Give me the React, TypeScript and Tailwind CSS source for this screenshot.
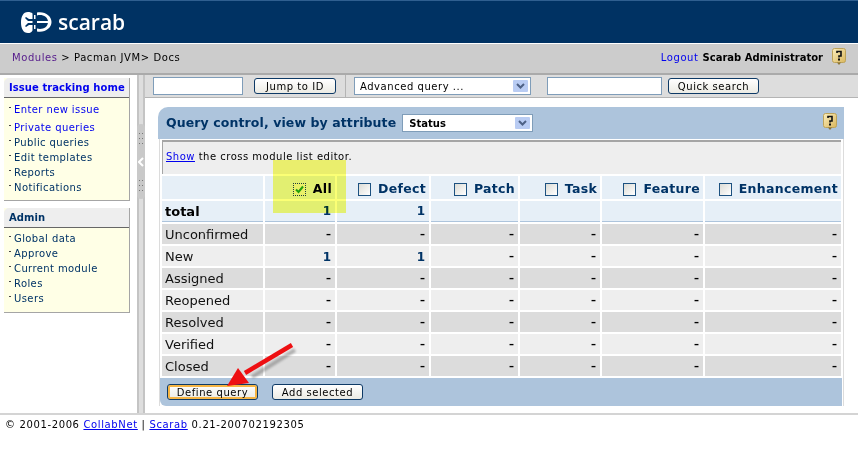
import React from 'react';

const HelpIcon = () => (
  <svg width="14" height="18" viewBox="0 0 14 18" className="block shrink-0">
    <defs>
      <linearGradient id="helpGold" x1="0" y1="0" x2="1" y2="1">
        <stop offset="0" stopColor="#fbeebd" />
        <stop offset="1" stopColor="#d9b65c" />
      </linearGradient>
    </defs>
    <rect x="0.5" y="0.5" width="13" height="14" rx="2" fill="url(#helpGold)" stroke="#bda35a" />
    <path d="M5 14.500h4l-2 2.500z" fill="#8a7336" />
    <path d="M5 5V3.500h4V8H7v1.500" fill="none" stroke="#111" strokeWidth="1.600" />
    <rect x="6" y="10.500" width="2" height="2" fill="#111" />
  </svg>
);

const SelectArrow = () => (
  <span className="flex h-[12px] w-[15px] items-center justify-center rounded-[1px] bg-[#b9ccf3]">
    <svg width="9" height="6" viewBox="0 0 9 6">
      <path d="M1 1l3.500 3.500L8 1" fill="none" stroke="#4d6185" strokeWidth="2" />
    </svg>
  </span>
);

const Button = ({ label, width, active }: { label: string; width: string; active?: boolean }) => (
  <button
    className={`flex h-[16px] items-center justify-center rounded-[3px] border border-[#0e3a66] bg-gradient-to-b from-white to-[#ecebe4] text-[10px] tracking-[0.55px] text-black ${width} ${
      active ? 'shadow-[inset_0_0_0_2px_#f6b544]' : ''
    }`}
  >
    {label}
  </button>
);

const Checkbox = ({ checked }: { checked?: boolean }) =>
  checked ? (
    <span className="flex h-[13px] w-[13px] items-center justify-center border border-dotted border-[#1d3f8a] bg-[#eef0e0]">
      <svg width="9" height="9" viewBox="0 0 9 9">
        <path d="M1 4.500l2.500 2.500L8 1.500" fill="none" stroke="#22a012" strokeWidth="2" />
      </svg>
    </span>
  ) : (
    <span className="h-[13px] w-[13px] border border-[#1c5180] bg-gradient-to-br from-[#dcdcd6] to-white" />
  );

const columns = ['All', 'Defect', 'Patch', 'Task', 'Feature', 'Enhancement'];

const rows: { name: string; values: string[] }[] = [
  { name: 'Unconfirmed', values: ['–', '–', '–', '–', '–', '–'] },
  { name: 'New', values: ['1', '1', '–', '–', '–', '–'] },
  { name: 'Assigned', values: ['–', '–', '–', '–', '–', '–'] },
  { name: 'Reopened', values: ['–', '–', '–', '–', '–', '–'] },
  { name: 'Resolved', values: ['–', '–', '–', '–', '–', '–'] },
  { name: 'Verified', values: ['–', '–', '–', '–', '–', '–'] },
  { name: 'Closed', values: ['–', '–', '–', '–', '–', '–'] },
];

const SideBox = ({
  title,
  titleClass,
  listClass,
  items,
}: {
  title: string;
  titleClass: string;
  listClass: string;
  items: { label: string; cls: string }[];
}) => (
  <div className="w-[126px] border-r border-b border-[#a5a5a5] bg-[#ffffe6]">
    <div className={`flex h-[20px] items-center rounded-tl-[5px] border-b border-[#666] bg-[#eeeeee] pl-[5px] text-[10px] font-bold tracking-[0.07px] whitespace-nowrap ${titleClass}`}>
      {title}
    </div>
    <div className={`flex flex-col pl-[5px] ${listClass}`}>
      {items.map((it) => (
        <div key={it.label} className={`flex h-[15px] items-center text-[10px] leading-[15px] ${it.cls}`}>
          <span className="mr-[3px] mb-[5px] h-[1px] w-[2px] bg-[#444]" />
          <span className="tracking-[0.4px]">{it.label}</span>
        </div>
      ))}
    </div>
  </div>
);

const GripDots = () => (
  <div className="h-[15px] w-[6px] bg-[radial-gradient(circle,#777_1px,transparent_1px)] bg-[length:3px_5px]" />
);

export default function App() {
  return (
    <div className="relative h-[461px] w-[858px] overflow-hidden bg-white font-['DejaVu_Sans','Liberation_Sans',sans-serif] text-[11px] text-black">
      {/* banner */}
      <div className="flex h-[43px] items-center border-t border-[#2f5f90] bg-[#003263] pl-[20px]">
        <svg width="32" height="22" viewBox="0 0 32 22" className="mr-[6px]">
          <g fill="#fff">
            <path d="M8 1c2 0 3.500.5 4.500 1.500V8H9L6 6l-1 1 3 3h4.500v2H8l-3 3 1 1 3-2h3.500v5.500C11.500 21.500 10 22 8 22 3 22 1 17 1 11.500S3 1 8 1z" />
            <path d="M14 4h1.500v4H14zM14 14h1.500v4H14z" />
            <path d="M17 1.500C25 0 31.500 5 31.500 11S25 22 17 20.500v-3c5 1.500 11-1 11-6.500S22 3 17 4.500z" />
            <rect x="17" y="10" width="11" height="2" />
          </g>
        </svg>
        <span className="font-['Open_Sans',sans-serif] text-[21px] leading-none font-semibold text-white">scarab</span>
      </div>
      <div className="h-[1px] bg-white" />

      {/* breadcrumb bar */}
      <div className="flex h-[31px] items-center justify-between border-b-2 border-[#aaaaaa] bg-[#cccccc] pr-[12px] pb-[3px] pl-[12px] tracking-[0.57px]">
        <div className="text-[10px]">
          <span className="text-[#551a8b]">Modules</span> &gt; Pacman JVM&gt; Docs
        </div>
        <div className="flex items-center text-[10px]">
          <span className="text-[#0000ee]">Logout</span>
          <span className="ml-[4px] font-bold tracking-[0px]">Scarab Administrator</span>
          <span className="ml-[9px]"><HelpIcon /></span>
        </div>
      </div>

      <div className="flex h-[340px] border-b-2 border-[#d4d4d4]">
        {/* sidebar */}
        <div className="flex w-[137px] shrink-0 flex-col gap-[7px] pt-[3px] pl-[4px]">
          <SideBox
            title="Issue tracking home"
            titleClass="text-[#0000ee]"
            listClass="pt-[4px] pb-[5px]"
            items={[
              { label: 'Enter new issue', cls: 'text-[#0000ee] mb-[3px]' },
              { label: 'Private queries', cls: 'text-[#0000ee]' },
              { label: 'Public queries', cls: 'text-[#003366]' },
              { label: 'Edit templates', cls: 'text-[#003366]' },
              { label: 'Reports', cls: 'text-[#003366]' },
              { label: 'Notifications', cls: 'text-[#003366]' },
            ]}
          />
          <SideBox
            title="Admin"
            titleClass="text-[#003366]"
            listClass="pt-[3px] pb-[6px]"
            items={[
              { label: 'Global data', cls: 'text-[#003366]' },
              { label: 'Approve', cls: 'text-[#003366]' },
              { label: 'Current module', cls: 'text-[#003366]' },
              { label: 'Roles', cls: 'text-[#003366]' },
              { label: 'Users', cls: 'text-[#003366]' },
            ]}
          />
        </div>

        {/* splitter */}
        <div className="relative w-[8px] shrink-0 border-x-2 border-[#c4c4c4] bg-[#dedede]">
          <div className="absolute top-[49px] left-[-2px] flex h-[75px] w-[8px] flex-col items-center justify-center rounded-[4px] bg-[#c9c9c9]">
            <GripDots />
            <svg width="6" height="10" viewBox="0 0 6 10" className="my-[11px]">
              <path d="M5 1L1 5l4 4" fill="none" stroke="#fff" strokeWidth="2" />
            </svg>
            <GripDots />
          </div>
        </div>

        <div className="min-w-0 flex-1">
          {/* toolbar */}
          <div className="flex h-[23px] items-center border-b border-[#b4b4b4] bg-[#dddddd] pl-[8px]">
            <span className="h-[18px] w-[90px] border border-[#7f9db9] bg-white" />
            <span className="ml-[11px]"><Button label="Jump to ID" width="w-[82px]" /></span>
            <span className="ml-[9px] w-[1px] self-stretch bg-[#b4b4b4]" />
            <div className="ml-[8px] flex h-[18px] w-[177px] items-center justify-between border border-[#7f9db9] bg-white pr-[2px] pl-[5px] text-[10px] tracking-[0.55px]">
              Advanced query ...
              <SelectArrow />
            </div>
            <span className="ml-[16px] h-[18px] w-[115px] border border-[#7f9db9] bg-white" />
            <span className="ml-[6px]"><Button label="Quick search" width="w-[91px]" /></span>
          </div>

          {/* panel */}
          <div className="mt-[9px] ml-[13px] w-[686px]">
            <div className="flex h-[32px] items-center justify-between rounded-tl-[10px] bg-[#adc4dc] pr-[7px] pl-[8px]">
              <div className="flex items-center">
                <span className="text-[12.500px] font-bold tracking-[0.1px] text-[#003366]">Query control, view by attribute</span>
                <div className="ml-[6px] flex h-[18px] w-[131px] items-center justify-between border border-[#7f9db9] bg-white pr-[2px] pl-[6px] text-[10px] font-bold">
                  Status
                  <SelectArrow />
                </div>
              </div>
              <span className="pb-[2px]"><HelpIcon /></span>
            </div>

            <div className="ml-[1px] border-x border-[#dcdcdc] bg-white pt-[1px]">
              <div className="ml-[2px] w-[679px]">
                <div className="flex h-[34px] items-center border-t-2 border-l border-[#a5a5a5] bg-[#eeeeee] pb-[3px] pl-[3px] text-[10px] tracking-[0.5px]">
                  <span className="text-[#0000ee] underline">Show</span>&nbsp;the cross module list editor.
                </div>

                <div className="mt-[2px] grid grid-cols-[101px_70px_92px_87px_80px_101px_136px] gap-[2px]">
                  <div className="h-[23px] bg-[#e6eff7]" />
                  {columns.map((c) => (
                    <div key={c} className="flex h-[23px] items-center justify-end bg-[#e6eff7] pt-[3px] pr-[3px] text-[12.500px] font-bold tracking-[0.3px] text-[#003366]">
                      <Checkbox checked={c === 'All'} />
                      <span className={`ml-[7px] ${c === 'All' ? 'text-black' : ''}`}>{c}</span>
                    </div>
                  ))}
                  <div className="flex h-[21px] items-center border-b border-[#adc4dc] bg-[#e6eff7] pt-[1px] pl-[3px] text-[13px] font-bold">total</div>
                  {['1', '1', '', '', '', ''].map((v, i) => (
                    <div key={i} className="flex h-[21px] items-center justify-end border-b border-[#adc4dc] bg-[#e6eff7] pr-[4px] text-[12px] font-bold text-[#003366]">{v}</div>
                  ))}
                  {rows.map((r, idx) => {
                    const bg = idx % 2 === 0 ? 'bg-[#dcdcdc]' : 'bg-[#eeeeee]';
                    return (
                      <React.Fragment key={r.name}>
                        <div className={`flex h-[20px] items-center pt-[1px] pl-[3px] text-[13px] text-[#111] ${bg}`}>{r.name}</div>
                        {r.values.map((v, i) => (
                          <div key={i} className={`flex h-[20px] items-center justify-end pt-[1px] pr-[4px] ${v === '1' ? 'text-[12px] font-bold text-[#003366]' : 'text-[10px] font-bold text-black'} ${bg}`}>{v}</div>
                        ))}
                      </React.Fragment>
                    );
                  })}
                </div>
              </div>

              <div className="mt-[2px] mr-[1px] flex h-[28px] items-center gap-[14px] rounded-bl-[6px] bg-[#adc4dc] pl-[7px]">
                <Button label="Define query" width="w-[91px]" active />
                <Button label="Add selected" width="w-[91px]" />
              </div>
            </div>
          </div>
        </div>
      </div>

      {/* footer */}
      <div className="pt-[2px] pl-[5px] text-[10px] tracking-[0.63px]">
        © 2001-2006 <span className="text-[#0000ee] underline">CollabNet</span> | <span className="text-[#0000ee] underline">Scarab</span> 0.21-200702192305
      </div>

      {/* yellow highlight drawn over the table */}
      <div className="absolute top-[160px] left-[273px] h-[53px] w-[73px] bg-[#fbff75] mix-blend-multiply" />

      {/* red annotation arrow */}
      <svg className="absolute top-[340px] left-[220px]" width="80" height="50" viewBox="0 0 80 50">
        <path d="M75 10L32 37" stroke="#666" strokeWidth="4" opacity="0.45" className="blur-[1px]" />
        <path d="M72 5L25 33" stroke="#ee0f12" strokeWidth="4.500" />
        <path d="M18 28L7 46l22-3z" fill="#ee0f12" />
      </svg>
    </div>
  );
}
